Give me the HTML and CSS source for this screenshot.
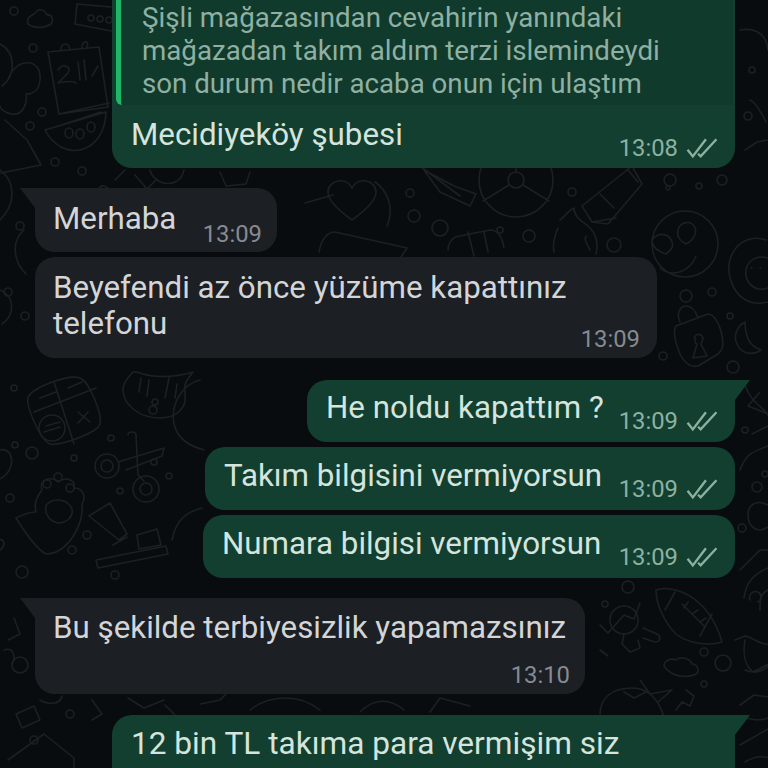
FILE: index.html
```html
<!DOCTYPE html>
<html lang="tr">
<head>
  <meta charset="UTF-8">
  <title>Sohbet</title>
  <link rel="stylesheet" href="styles.css">
</head>
<body>
  <div class="chat">
    <svg class="doodles" width="768" height="768" viewBox="0 0 768 768" fill="none" stroke="#1c2023" stroke-width="1.6" stroke-linejoin="round" stroke-linecap="round">
      <!-- cloud, ticket, calendar, watermelon -->
      <path d="M28 24c-3-8 7-9 9-13 4-3 9 0 10 4 5-1 7 5 4 9-6 4-16 5-23 0z"/>
      <path d="M77 4l34 3M77 4l-2 20 36 7"/>
      <circle cx="91" cy="18" r="3"/><circle cx="100" cy="19" r="3"/><circle cx="109" cy="20" r="3"/>
      <path d="M48 52l51-5 9 60-49 7zM59 114l50-11M61 50c-1-7 8-9 9 0M82 48c-1-7 8-9 5-1"/>
      <path d="M58 70c5-8 14-3 10 3l-10 10c6-1 14-3 18 0"/><path d="M80 80l-2-18M86 80l-2-20M92 76l6-10"/>
      <path d="M45 130c18 34 60 24 61-18zM52 128l49-16"/>
      <ellipse cx="69" cy="133" rx="4" ry="5"/><ellipse cx="80" cy="134" rx="4" ry="5"/><ellipse cx="91" cy="127" rx="4" ry="5"/>
      <circle cx="14" cy="11" r="4"/><circle cx="33" cy="48" r="4"/><circle cx="42" cy="112" r="4"/><circle cx="30" cy="126" r="4"/><circle cx="55" cy="162" r="4"/><circle cx="82" cy="171" r="4"/>
      <path d="M0 44c16 8 16 32 2 42M8 80c6-22 34-24 32 0-1 14-12 14-14 14 2 10-4 22-14 20-8-1-12-6-12-8M5 120l22 20 14 25-40 8"/>
      <path d="M110 190c-10-10-14 0-12 12"/>
      <!-- left column, behind the received messages -->
      <path d="M0 170c16 12 16 34 0 50M0 290c14 6 16 24 2 34M24 230c-12 10-12 30 2 44"/>
      <circle cx="20" cy="226" r="4"/><circle cx="8" cy="292" r="4"/><circle cx="25" cy="316" r="4"/>
      <!-- calculator, cat, scissors, paw, tube -->
      <path d="M28 398c2-10 40-24 52-20 10 4 22 36 20 46-2 8-38 22-50 20-10-4-24-38-22-46z"/>
      <path d="M54 382l20 62M34 412l62-24M40 398l16-6M68 388l14-6M46 426l14-4M44 432l16-5M78 412l12 10M88 412l-10 11"/>
      <circle cx="52" cy="428" r="13"/>
      <path d="M137 372c14 6 36 6 56 0-6 8-10 12-8 22 2 14-8 24-26 24-20 0-36-14-36-28 0-6 4-12 10-18z"/>
      <path d="M139 392l2-14M147 396l2-16M165 398l4-20M175 398l2-14"/><circle cx="153" cy="410" r="4"/><circle cx="155" cy="402" r="3"/>
      <circle cx="107" cy="466" r="12"/><circle cx="107" cy="466" r="6"/><circle cx="146" cy="489" r="13"/><circle cx="146" cy="489" r="6"/>
      <path d="M118 462l46-14-2 8-36 14M128 435c0-4 8-4 8 0l2 40 6 6"/>
      <path d="M42 490c-4-12 12-14 16-8 8-6 18-2 16 6 10 0 12 10 8 16 2 20-14 50-36 50-8-4-20-20-30-36 8-4 16-6 20-6-2-8 0-14 6-22z"/>
      <circle cx="47" cy="484" r="4"/><circle cx="58" cy="477" r="4"/><circle cx="70" cy="488" r="4"/><path d="M46 505c8-8 22-6 26 4 2 8-6 14-14 14-8-2-14-8-12-18z"/>
      <path d="M89 516l21-13 17 31-8 6zM113 545l14-8"/>
      <path d="M96 560l70-14 2 8-70 14zM137 535l20-6 4 16-22 4z"/>
      <circle cx="14" cy="388" r="3"/><circle cx="15" cy="445" r="3"/><circle cx="32" cy="453" r="6"/><circle cx="74" cy="458" r="3"/><circle cx="111" cy="438" r="3"/><circle cx="154" cy="462" r="3"/><circle cx="120" cy="491" r="3"/><circle cx="169" cy="476" r="3"/><circle cx="10" cy="498" r="4"/><circle cx="87" cy="535" r="4"/><circle cx="72" cy="550" r="4"/><circle cx="22" cy="572" r="6"/><circle cx="115" cy="575" r="4"/>
      <path d="M0 450c16-4 16 26-4 30M0 540c4-2 6 6 0 10M200 380c-16 4-30 22-26 44 4 16 16 22 30 26M172 540c4-20 14-28 30-32"/>
      <!-- lower left, below the last received message -->
      <path d="M14 618l6 16-12 6M4 650c10-4 12 8 8 14M16 714l18-8 6 14-18 8zM8 760l36-26 30 24v10"/>
      <circle cx="20" cy="665" r="8"/><circle cx="70" cy="714" r="4"/><circle cx="34" cy="740" r="4"/>
      <path d="M40 700c6 4 20 6 22-4M92 700l10 14-10 6M128 698l16 10 20-8M165 705l10 10M200 704l20-4 8-8M250 710c20-16 50-16 70 0M360 712c14-14 30-14 44-2M430 712l10-14 30 8"/>
      <!-- band under the first bubble -->
      <path d="M125 170l-10 10M135 175l12 14 10-10M150 170c4 16 30 20 34 0M220 172l6 14 20-2 4-12"/>
      <path d="M352 220c-14-10-24-20-24-28 0-12 18-16 24-4 6-12 24-8 24 4 0 8-10 18-24 28z"/>
      <path d="M305 203l28-8M375 182c12 8 20 26 12 44M335 232c-8 0-14 8-16 20M335 232l72 16-8 12"/>
      <circle cx="516" cy="180" r="37"/><circle cx="516" cy="180" r="8"/><path d="M516 172v-30M523 185l26 16M509 185l-26 16M424 170l30 16 22 8-6 12-30-14zM420 166l40 30"/>
      <circle cx="410" cy="193" r="4"/><circle cx="414" cy="216" r="6"/><circle cx="440" cy="228" r="8"/><circle cx="500" cy="230" r="3"/><circle cx="529" cy="236" r="6"/><circle cx="572" cy="192" r="4"/>
      <path d="M448 250c0-8 6-14 12-14l30-6c8 0 12 6 14 18M468 232l6 24M484 232l4 20"/>
      <path d="M560 220c8-6 8-10 14-12 0 10 10 14 16 20 8 8 8 20 6 26M590 250c-4-8-6-10-4-14M554 252c-2-8 2-20 4-24"/>
      <path d="M592 222l-10-16 50-40 10 18-34 40zM592 222l24-4M600 194l14 14M628 170l10 12"/>
      <circle cx="614" cy="245" r="7"/><circle cx="670" cy="180" r="6"/><circle cx="668" cy="188" r="2"/><circle cx="722" cy="180" r="5"/><circle cx="699" cy="186" r="3"/>
      <circle cx="685" cy="244" r="33"/><path d="M652 240c4-6 12-8 18-2 4 6 4 10-4 16-6-2-14-6-14-14zM678 230c2-8 12-10 16-4 4 6 0 14-8 18-4-2-10-6-8-14zM660 268c12 10 30 4 36-12"/>
      <path d="M766 240c-24-8-42 14-36 38 6 22 22 28 38 24M768 258c-14-4-24 6-22 18 2 10 12 16 22 12M751 268h1M760 268h1"/>
      <circle cx="686" cy="296" r="6"/><circle cx="712" cy="292" r="4"/><circle cx="730" cy="316" r="3"/><circle cx="663" cy="356" r="4"/><circle cx="733" cy="367" r="6"/>
      <path d="M676 326l32-12c6 0 12 10 14 22 2 12 0 14-4 18l-20 12c-8 2-14-4-18-12-4-10-8-22-4-28zM680 322c-4-8 0-16 6-16s10 6 12 12M695 340c-2-6 6-8 8-2 0 4-2 4-2 6l6 12-14 2 4-14c-2 0-2-2-2-4z"/>
      <path d="M745 322c-8 4-12 14-8 22 4 10 16 12 24 6-6-2-12-6-14-14-2-6-2-10-2-14z"/>
      <path d="M745 150l12-8 10-2M750 100c6 2 12 14 16 22M740 30c10-2 26 0 28 20"/>
      <circle cx="748" cy="116" r="4"/><circle cx="752" cy="70" r="3"/>
      <!-- lower right: reel, turtle, football, fruit -->
      <path d="M745 385c6 20 24 24 24 34M760 392l-12 14 20 8M752 434l16-8M740 470c6-16 12-18 28-24M768 505c-12-6-20 0-20 10s8 20 20 12"/>
      <circle cx="757" cy="487" r="5"/><circle cx="765" cy="474" r="3"/><circle cx="745" cy="430" r="3"/><circle cx="742" cy="528" r="4"/>
      <path d="M740 570l20-20h8M768 568c-14 6-22 14-24 30M768 590c-8 4-8 8-8 20"/>
      <path d="M656 590c10-4 30 0 44 14 12 10 20 30 22 38-12 4-34 2-46-8-12-12-20-30-20-44zM665 610l10-18M700 636l12-22M682 604l22 22M688 602l-4 6M698 610l-6 4M706 618l-6 4"/>
      <circle cx="624" cy="620" r="14"/><circle cx="628" cy="587" r="6"/><circle cx="605" cy="604" r="3"/><circle cx="704" cy="652" r="4"/><circle cx="704" cy="684" r="3"/><circle cx="723" cy="663" r="8"/>
      <path d="M600 625l8 8 16-18 10 4 6-16M643 628l14 6c4 2 4 8-2 8l-12-4M624 634l-2 10 8 8 10-4-2-8M600 650l8 6"/>
      <path d="M664 666c0-6 8-8 12-6 4-4 14-2 16 4 6 0 8 8 4 10-8 4-24 4-32-8z"/>
      <path d="M600 714c0-16 12-26 32-26 18 0 28 14 32 30M624 692l10 6 12-6M640 680l10 14 22-4-14 12M686 690l8 6-4 10-8-4-6 8"/>
      <path d="M735 640l10-4c10 2 16 10 24 8M745 640c-2 12-2 24 8 32l16-8M745 670c8 4 16 2 24-4M750 600c-2-4 2-10 8-8 4 2 4 8 0 10"/>
      <path d="M740 705l14-10 14 2M738 720c10-6 16 4 30-2M740 745l28-16M745 762c10-6 18-6 24-4"/>
    </svg>

    <div class="msg out first">
      <div class="quote">
        <p>Şişli mağazasından cevahirin yanındaki</p>
        <p>mağazadan takım aldım terzi islemindeydi</p>
        <p>son durum nedir acaba onun için ulaştım</p>
      </div>
      <div class="row">
        <span class="text">Mecidiyeköy şubesi</span>
        <span class="meta">13:08 <svg class="ticks" viewBox="0 0 24 16" fill="none" stroke="currentColor" stroke-width="1.8"><path d="M1 9l4 5L15 1M9 12l2 2L23 1"/></svg></span>
      </div>
    </div>

    <div class="msg in tail merhaba">
      <div class="row">
        <span class="text">Merhaba</span>
        <span class="meta">13:09</span>
      </div>
    </div>

    <div class="msg in beyefendi">
      <p class="text">Beyefendi az önce yüzüme kapattınız<br>telefonu</p>
      <div class="meta-row"><span class="meta">13:09</span></div>
    </div>

    <div class="msg out tail noldu">
      <div class="row">
        <span class="text">He noldu kapattım ?</span>
        <span class="meta">13:09 <svg class="ticks" viewBox="0 0 24 16" fill="none" stroke="currentColor" stroke-width="1.8"><path d="M1 9l4 5L15 1M9 12l2 2L23 1"/></svg></span>
      </div>
    </div>

    <div class="msg out takim">
      <div class="row">
        <span class="text">Takım bilgisini vermiyorsun</span>
        <span class="meta">13:09 <svg class="ticks" viewBox="0 0 24 16" fill="none" stroke="currentColor" stroke-width="1.8"><path d="M1 9l4 5L15 1M9 12l2 2L23 1"/></svg></span>
      </div>
    </div>

    <div class="msg out numara">
      <div class="row">
        <span class="text">Numara bilgisi vermiyorsun</span>
        <span class="meta">13:09 <svg class="ticks" viewBox="0 0 24 16" fill="none" stroke="currentColor" stroke-width="1.8"><path d="M1 9l4 5L15 1M9 12l2 2L23 1"/></svg></span>
      </div>
    </div>

    <div class="msg in tail sekil">
      <p class="text">Bu şekilde terbiyesizlik yapamazsınız</p>
      <div class="meta-row"><span class="meta">13:10</span></div>
    </div>

    <div class="msg out tail last">
      <p class="text">12 bin TL takıma para vermişim siz</p>
    </div>
  </div>
</body>
</html>
```

FILE: styles.css
```css
html, body {
  margin: 0;
  padding: 0;
  background: #090c0f;
}

body {
  font-family: Roboto, "Noto Sans", sans-serif;
}

.chat {
  position: relative;
  width: 768px;
  height: 768px;
  overflow: hidden;
  display: flex;
  flex-direction: column;
  background: #090c0f;
}

.doodles {
  position: absolute;
  top: 0;
  left: 0;
  filter: blur(0.4px);
}

p {
  margin: 0;
}

.msg {
  position: relative;
  flex: none;
  box-sizing: border-box;
  border-radius: 20px;
}

.msg.out {
  align-self: flex-end;
  margin-right: 33px;
  background: #123f30;
  color: #d5e4dd;
}

.msg.in {
  align-self: flex-start;
  margin-left: 35px;
  background: #1c1f24;
  color: #d3d5d7;
}

.msg.tail.out {
  border-top-right-radius: 0;
}

.msg.tail.in {
  border-top-left-radius: 0;
}

/* little corner that sticks out of the first bubble in a group */
.msg.tail::before {
  content: "";
  position: absolute;
  top: 0;
  width: 15px;
  height: 20px;
}

.msg.tail.out::before {
  right: -15px;
  background: #123f30;
  clip-path: polygon(0 0, 100% 0, 0 100%);
}

.msg.tail.in::before {
  left: -15px;
  background: #1c1f24;
  clip-path: polygon(0 0, 100% 0, 100% 100%);
}

.text {
  font-size: 31.3px;
  line-height: 36px;
  white-space: nowrap;
}

.row {
  display: flex;
  justify-content: space-between;
  align-items: flex-start;
}

.meta {
  display: inline-flex;
  align-items: center;
  gap: 8px;
  font-size: 23.8px;
  line-height: 28px;
  white-space: nowrap;
}

.msg.in .meta {
  color: #868b90;
}

.msg.out .meta {
  color: #8db1a1;
}

.ticks {
  width: 32px;
  height: 21px;
}

.meta-row {
  display: flex;
  justify-content: flex-end;
}

/* individual messages */
.first {
  width: 623px;
  height: 188px;
  margin-top: -20px;
  padding: 0 17px 0 19px;
}

.quote {
  box-sizing: border-box;
  height: 125px;
  margin: 0 0 0 -15px;
  width: 617px;
  padding: 21px 0 0 21px;
  border-left: 5px solid #1eb768;
  border-radius: 0 0 0 6px;
  background: #103a2c;
  font-size: 27.7px;
  line-height: 33px;
  color: #8fb0a2;
  white-space: nowrap;
}

.first .row {
  margin-top: 12px;
}

.first .meta {
  margin-top: 17px;
}

.merhaba {
  width: 242px;
  height: 64px;
  margin-top: 20px;
  padding: 13px 15px 0 18px;
}

.merhaba .meta {
  margin-top: 19px;
}

.beyefendi {
  width: 622px;
  height: 101px;
  margin-top: 5px;
  padding: 13px 17px 0 18px;
}

.beyefendi .meta-row {
  margin-top: -17px;
}

.noldu {
  width: 428px;
  height: 62px;
  margin-top: 22px;
  padding: 10px 17px 0 19px;
}

.takim {
  width: 530px;
  height: 63px;
  margin-top: 5px;
  padding: 11px 17px 0 19px;
}

.numara {
  width: 532px;
  height: 63px;
  margin-top: 5px;
  padding: 11px 17px 0 19px;
}

.noldu .meta {
  margin-top: 17px;
}

.takim .meta,
.numara .meta {
  margin-top: 17px;
}

.sekil {
  width: 550px;
  height: 96px;
  margin-top: 20px;
  padding: 12px 15px 0 18px;
}

.sekil .meta-row {
  margin-top: 15px;
}

.last {
  width: 623px;
  height: 100px;
  margin-top: 21px;
  padding: 11px 19px 0 19px;
}

.last .text {
  font-size: 31.6px;
}
```
